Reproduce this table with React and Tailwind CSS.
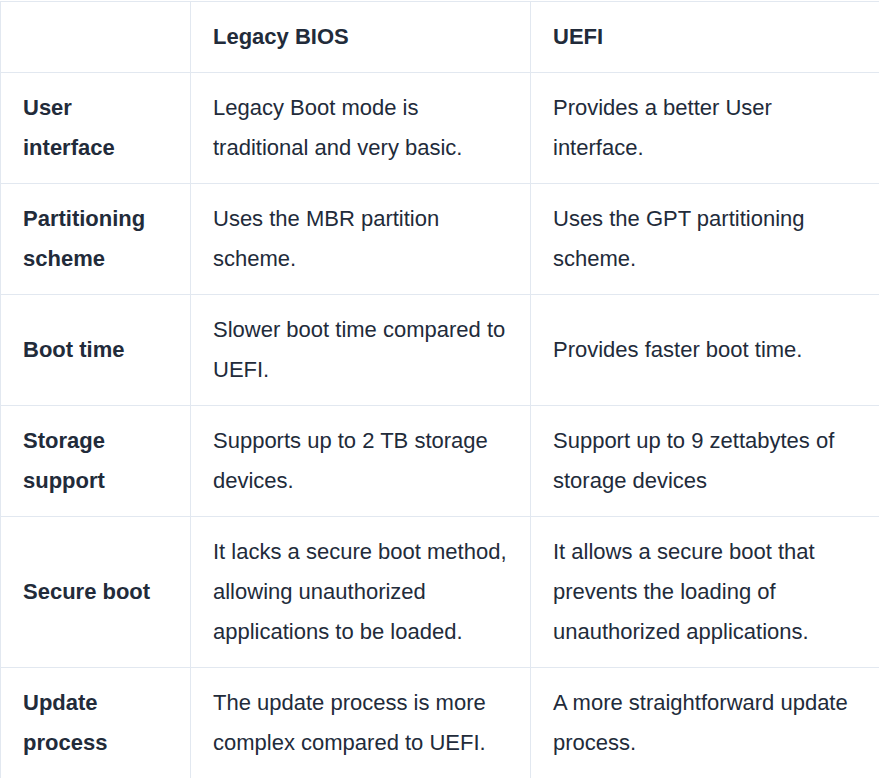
import React from 'react'

const rows = [
  ['User interface', 'Legacy Boot mode is traditional and very basic.', 'Provides a better User interface.'],
  ['Partitioning scheme', 'Uses the MBR partition scheme.', 'Uses the GPT partitioning scheme.'],
  ['Boot time', 'Slower boot time compared to UEFI.', 'Provides faster boot time.'],
  ['Storage support', 'Supports up to 2 TB storage devices.', 'Support up to 9 zettabytes of storage devices'],
  ['Secure boot', 'It lacks a secure boot method, allowing unauthorized applications to be loaded.', 'It allows a secure boot that prevents the loading of unauthorized applications.'],
  ['Update process', 'The update process is more complex compared to UEFI.', 'A more straightforward update process.'],
]

const cell = 'border border-[#e2e8f0] px-[22px] py-[15px] align-middle text-left'

const App = () => {
  return (
    <div className="bg-white pt-px text-[22px] leading-[40px] text-[#222b3a] font-['Liberation_Sans',Arial,sans-serif]">
      <table className="table-fixed border-collapse w-[880px]">
        <colgroup>
          <col className="w-[190px]" />
          <col className="w-[340px]" />
          <col className="w-[350px]" />
        </colgroup>
        <thead>
          <tr>
            <th className={cell}></th>
            <th className={`${cell} font-bold`}>Legacy BIOS</th>
            <th className={`${cell} font-bold`}>UEFI</th>
          </tr>
        </thead>
        <tbody>
          {rows.map(([label, bios, uefi]) => (
            <tr key={label}>
              <td className={`${cell} font-bold`}>{label}</td>
              <td className={cell}>{bios}</td>
              <td className={cell}>{uefi}</td>
            </tr>
          ))}
        </tbody>
      </table>
    </div>
  )
}

export default App
